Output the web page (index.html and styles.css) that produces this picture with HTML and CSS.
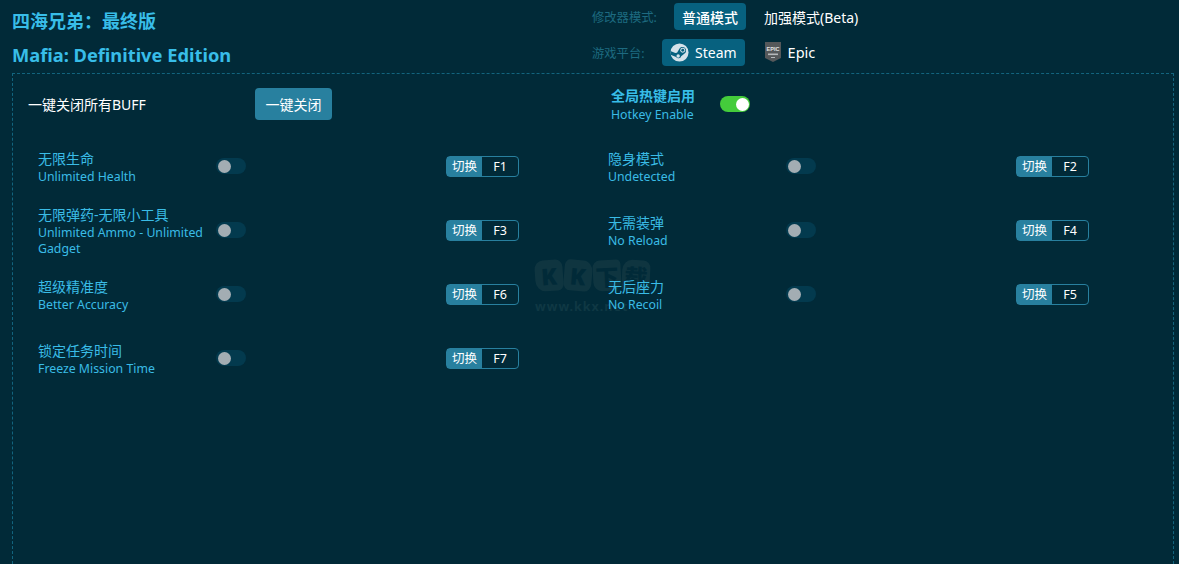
FILE: index.html
```html
<!DOCTYPE html>
<html lang="zh-CN">
<head>
<meta charset="utf-8">
<title>Mafia: Definitive Edition</title>
<link rel="stylesheet" href="styles.css">
</head>
<body>
<header class="top">
  <div class="titles">
    <h1 class="title">四海兄弟：最终版</h1>
    <h2 class="title title-en">Mafia: Definitive Edition</h2>
  </div>
  <div class="modes">
    <div class="mode-row">
      <span class="mode-label">修改器模式:</span>
      <span class="pill active strong">普通模式</span>
      <span class="pill">加强模式(Beta)</span>
    </div>
    <div class="mode-row">
      <span class="mode-label">游戏平台:</span>
      <span class="pill active platform">
        <svg class="icon" viewBox="0 0 20 20"><circle cx="10" cy="10" r="9.5" fill="#d5e2ea"/><path d="M0.6 12.400 6.400 14.800A3 3 0 0 0 11.800 14L15 11.300A3.800 3.800 0 1 0 9.600 6.600L7.400 10.200A3 3 0 0 0 5.600 10.600L0.400 8.400Z" fill="#07617f"/><circle cx="13.400" cy="7.600" r="2.600" fill="#d5e2ea"/><circle cx="13.400" cy="7.600" r="1.500" fill="#07617f"/><circle cx="8.600" cy="13.600" r="1.800" fill="#d5e2ea"/></svg>
        Steam
      </span>
      <span class="pill platform platform-epic">
        <svg class="icon-epic" viewBox="0 0 16 20"><path d="M0 0H16V16L8 20 0 16Z" fill="#55585a"/><text x="8" y="9" text-anchor="middle" class="epic-mark">EPIC</text><rect x="3" y="11.500" width="10" height="1.600" fill="#b5b8ba"/><rect x="6" y="15" width="4" height="1" fill="#b5b8ba"/></svg>
        Epic
      </span>
    </div>
  </div>
</header>

<main class="panel">
  <div class="watermark">
    <div class="wm-logo">
      <span class="wm-blob blob-a">K</span>
      <span class="wm-blob blob-b">K</span>
      <span class="wm-blob blob-c">下</span>
      <span class="wm-blob blob-d">载</span>
    </div>
    <div class="wm-url">www.kkx.net</div>
  </div>

  <div class="panel-head">
    <div class="all-off">
      <span class="all-off-label">一键关闭所有BUFF</span>
      <button class="all-off-btn">一键关闭</button>
    </div>
    <div class="hotkey-enable">
      <div class="hotkey-text">
        <div class="hotkey-cn">全局热键启用</div>
        <div class="en">Hotkey Enable</div>
      </div>
      <span class="switch on"></span>
    </div>
  </div>

  <div class="cheats">
    <div class="cheat">
      <div class="name"><div class="cn">无限生命</div><div class="en">Unlimited Health</div></div>
      <span class="switch"></span>
      <div class="key"><span class="key-tag">切换</span><span class="key-value">F1</span></div>
    </div>
    <div class="cheat">
      <div class="name"><div class="cn">隐身模式</div><div class="en">Undetected</div></div>
      <span class="switch"></span>
      <div class="key"><span class="key-tag">切换</span><span class="key-value">F2</span></div>
    </div>
    <div class="cheat">
      <div class="name"><div class="cn">无限弹药-无限小工具</div><div class="en">Unlimited Ammo - Unlimited Gadget</div></div>
      <span class="switch"></span>
      <div class="key"><span class="key-tag">切换</span><span class="key-value">F3</span></div>
    </div>
    <div class="cheat">
      <div class="name"><div class="cn">无需装弹</div><div class="en">No Reload</div></div>
      <span class="switch"></span>
      <div class="key"><span class="key-tag">切换</span><span class="key-value">F4</span></div>
    </div>
    <div class="cheat">
      <div class="name"><div class="cn">超级精准度</div><div class="en">Better Accuracy</div></div>
      <span class="switch"></span>
      <div class="key"><span class="key-tag">切换</span><span class="key-value">F6</span></div>
    </div>
    <div class="cheat">
      <div class="name"><div class="cn">无后座力</div><div class="en">No Recoil</div></div>
      <span class="switch"></span>
      <div class="key"><span class="key-tag">切换</span><span class="key-value">F5</span></div>
    </div>
    <div class="cheat">
      <div class="name"><div class="cn">锁定任务时间</div><div class="en">Freeze Mission Time</div></div>
      <span class="switch"></span>
      <div class="key"><span class="key-tag">切换</span><span class="key-value">F7</span></div>
    </div>
  </div>
</main>
</body>
</html>
```
FILE: styles.css
```css
* { box-sizing: border-box; }
html, body { height: 564px; overflow: hidden; }
body {
  margin: 0;
  background: #012a38;
  color: #fff;
  font-family: "Noto Sans", "Noto Sans CJK SC", sans-serif;
}
.top {
  height: 73px;
  display: flex;
  padding-left: 12px;
}
.titles { width: 580px; padding-top: 8px; }
.title {
  margin: 0;
  height: 26px;
  line-height: 26px;
  font-size: 18px;
  font-weight: 700;
  color: #38bde8;
}
.title-en { margin-top: 8px; font-size: 18.3px; }
.modes { padding-top: 3px; display: flex; flex-direction: column; gap: 9px; }
.mode-row { display: flex; align-items: center; height: 27px; }
.mode-label { font-size: 12.300px; color: #1d6a80; width: 82px; }
.mode-row:last-child .mode-label { width: 70px; }
.pill {
  display: flex;
  align-items: center;
  height: 27px;
  padding: 0 8px;
  margin-right: 10px;
  border-radius: 4px;
  font-size: 14px;
  white-space: nowrap;
}
.strong { font-weight: 500; }
.active { background: #07617f; }
.platform { gap: 6px; margin-right: 12px; }
.platform-epic { gap: 7px; font-size: 14.500px; padding-bottom: 1px; }
.icon { width: 19px; height: 19px; }
.icon-epic { width: 16px; height: 20px; }
.epic-mark { font-size: 5.500px; font-weight: 700; fill: #e4e6e7; font-family: "Liberation Sans", sans-serif; }

.panel {
  position: relative;
  margin-left: 12px;
  width: 1162px;
  height: 491px;
  border: 1px dashed #12647e;
  border-bottom: 0;
}
.panel-head { display: flex; height: 60px; padding: 14px 0 0 15px; }
.all-off { display: flex; align-items: center; width: 583px; height: 32px; }
.all-off-label { width: 227px; font-size: 14px; }
.all-off-btn {
  width: 77px;
  height: 32px;
  padding: 0;
  border: 0;
  border-radius: 4px;
  background: #28809f;
  color: #fff;
  font-family: inherit;
  font-size: 14px;
}
.hotkey-enable { display: flex; align-items: center; height: 32px; }
.hotkey-text { width: 109px; padding-top: 2px; }
.hotkey-cn { font-size: 14px; font-weight: 700; color: #38bde8; line-height: 17px; }
.en { font-size: 12.300px; line-height: 16px; margin-top: 1px; color: #3abce6; }
.hotkey-cn + .en { line-height: 17px; margin-top: 2px; }
.cn { font-size: 14px; line-height: 18px; color: #3abce6; }
.cheats {
  position: relative;
  display: grid;
  grid-template-columns: 570px 570px;
  grid-auto-rows: 64px;
  padding-left: 25px;
}
.cheat { display: flex; align-items: center; }
.name { width: 178px; padding-top: 3px; }
.switch {
  position: relative;
  display: block;
  flex: none;
  width: 30px;
  height: 16px;
  border-radius: 8px;
  background: #033a4e;
}
.switch::after {
  content: "";
  position: absolute;
  left: 1.500px;
  top: 1.500px;
  width: 13px;
  height: 13px;
  border-radius: 50%;
  background: #a3adb3;
}
.switch.on { background: #44cc3b; }
.switch.on::after { left: 16px; background: #fff; }
.key {
  display: flex;
  width: 73px;
  height: 21px;
  margin-left: 200px;
  border: 1px solid #28809f;
  border-radius: 4px;
  font-size: 12.500px;
  line-height: 19px;
}
.key-tag { width: 35px; background: #28809f; text-align: center; }
.key-value { flex: 1; text-align: center; }
.watermark {
  position: absolute;
  left: 522px;
  top: 186px;
  color: #0f3844;
  pointer-events: none;
}
.wm-logo { display: flex; gap: 1px; height: 32px; margin-bottom: 7px; }
.wm-blob {
  display: flex;
  align-items: center;
  justify-content: center;
  width: 28px;
  height: 31px;
  background: #0f3540;
  color: #012a38;
  font-size: 23px;
  font-weight: 900;
}
.blob-a { border-radius: 30% 25% 20% 35%; transform: rotate(-4deg); }
.blob-b { border-radius: 20% 35% 25% 25%; transform: rotate(5deg); }
.blob-c { border-radius: 25% 15% 35% 30%; transform: rotate(-3deg); }
.blob-d { border-radius: 35% 25% 25% 15%; transform: rotate(3deg); }
.wm-url { font-size: 12.500px; font-weight: 700; line-height: 16px; letter-spacing: 1px; white-space: nowrap; }
```
